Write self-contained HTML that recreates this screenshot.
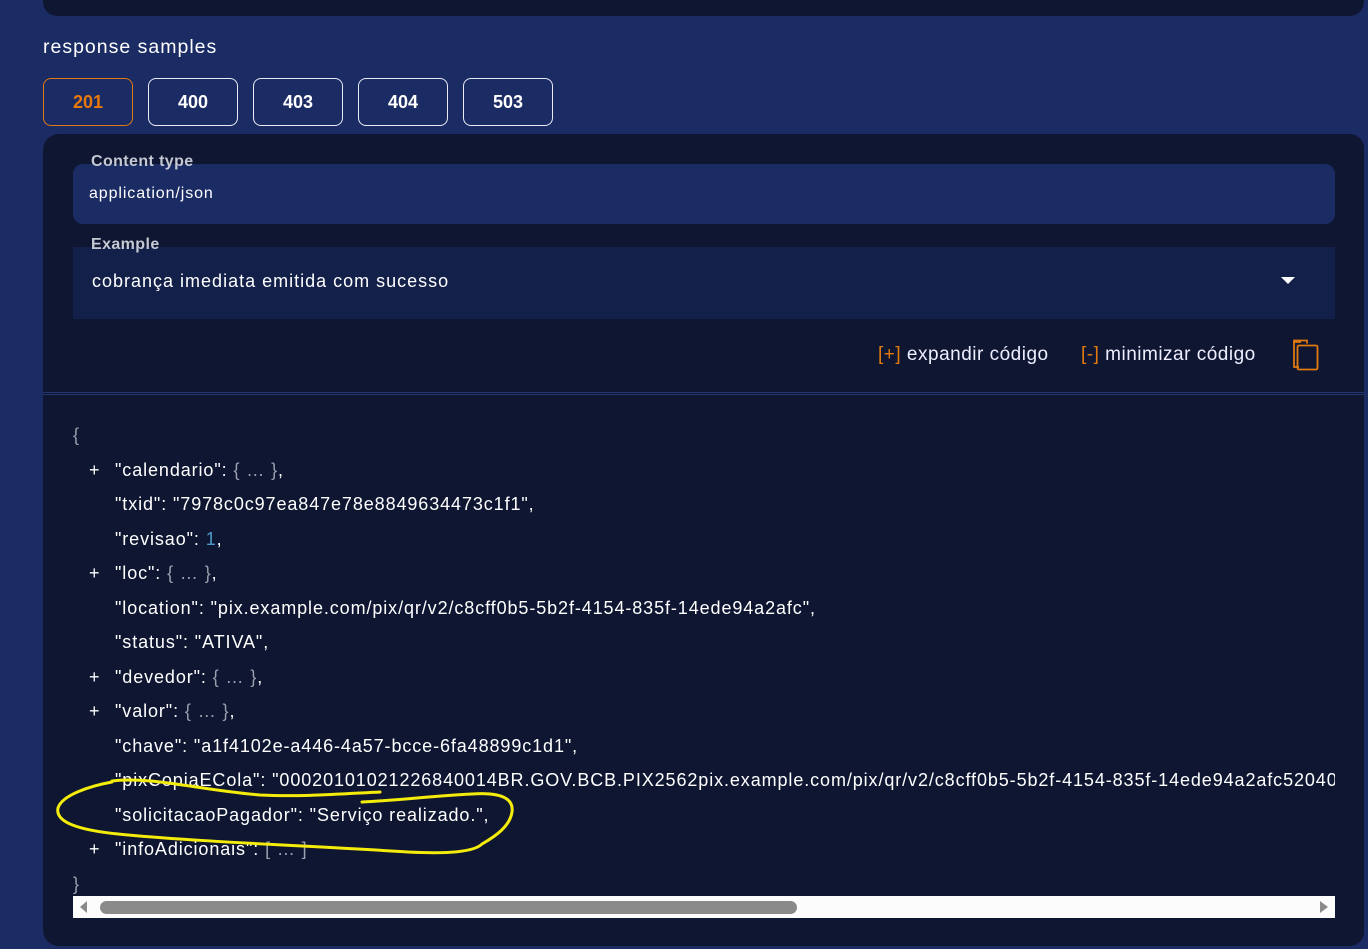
<!DOCTYPE html>
<html><head><meta charset="utf-8"><style>
*{margin:0;padding:0;box-sizing:border-box}
html,body{width:1368px;height:949px;overflow:hidden;background:#1b2b64;font-family:"Liberation Sans",Arial,sans-serif;color:#fff}
.top{position:absolute;left:43px;top:-20px;width:1321px;height:36px;background:#0e1632;border-radius:0 0 14px 14px}
.title{position:absolute;left:43px;top:36px;font-size:19.5px;letter-spacing:1px;color:#fff}
.tab{position:absolute;top:78px;width:90px;height:48px;border:1px solid #e9ecf5;border-radius:8px;font-weight:bold;font-size:18px;text-align:center;line-height:46px;color:#fff}
.tab.a{border-color:#e07a10;color:#e8780c}
.panel{position:absolute;left:43px;top:134px;width:1321px;height:812px;background:#0e1632;border-radius:16px 14px 14px 16px;overflow:hidden}
.lbl{position:absolute;left:48px;font-weight:bold;font-size:16px;letter-spacing:.4px;color:#c5c9d4;z-index:2}
.ct{position:absolute;left:30px;top:30px;width:1262px;height:60px;background:#1b2b64;border-radius:10px;font-size:16px;letter-spacing:.9px;padding:21px 0 0 16px}
.ex{position:absolute;left:30px;top:113px;width:1262px;height:72px;background:#13204a;font-size:18px;letter-spacing:1px;padding:24px 0 0 19px}
.tri{position:absolute;right:40px;top:30px;width:0;height:0;border-left:7px solid transparent;border-right:7px solid transparent;border-top:7px solid #fff}
.act{position:absolute;top:210px;font-size:19px;letter-spacing:.5px;color:#eef}
.act b{font-weight:normal;color:#e07a10}
.sep{position:absolute;left:0;top:258px;width:100%;height:3px;border-top:1px solid #22356e;border-bottom:1px solid #22356e}
.code{position:absolute;left:30px;top:284px;width:1262px;height:476px;overflow:hidden;font-size:18px;letter-spacing:.9px;line-height:34.5px;white-space:pre;color:#fff}
.code div{position:relative;padding-left:42px;height:34.5px}
.code div.b{padding-left:0}
.code i{font-style:normal;position:absolute;left:16px}
.g{color:#9aa0ad}.n{color:#4f9ac8}
.sb{position:absolute;left:30px;top:762px;width:1262px;height:22px;background:#fcfcfc}
.th{position:absolute;left:27px;top:5px;width:697px;height:13px;background:#8a8a8a;border-radius:7px}
</style></head><body>
<div class="top"></div>
<div class="title">response samples</div>
<div class="tab a" style="left:43px">201</div>
<div class="tab" style="left:148px">400</div>
<div class="tab" style="left:253px">403</div>
<div class="tab" style="left:358px">404</div>
<div class="tab" style="left:463px">503</div>
<div class="panel">
<div class="lbl" style="top:19px">Content type</div>
<div class="ct">application/json</div>
<div class="lbl" style="top:102px">Example</div>
<div class="ex">cobrança imediata emitida com sucesso<div class="tri"></div></div>
<div class="act" style="left:835px"><b>[+]</b> expandir código</div>
<div class="act" style="left:1038px"><b>[-]</b> minimizar código</div>
<svg style="position:absolute;left:1246px;top:204px" width="32" height="34"><path d="M12 4H5v25h5" fill="none" stroke="#e07a10" stroke-width="1.8"/><path d="M5 4v-1.5h13v3" fill="none" stroke="#e07a10" stroke-width="1.8"/><rect x="8.5" y="7.5" width="20" height="24" rx="1.5" fill="none" stroke="#e07a10" stroke-width="1.8"/></svg>
<div class="sep"></div>
<div class="code"><div class="b"><span class="g">{</span></div><div><i>+</i>"calendario": <span class="g">{ … }</span>,</div><div>"txid": "7978c0c97ea847e78e8849634473c1f1",</div><div>"revisao": <span class="n">1</span>,</div><div><i>+</i>"loc": <span class="g">{ … }</span>,</div><div>"location": "pix.example.com/pix/qr/v2/c8cff0b5-5b2f-4154-835f-14ede94a2afc",</div><div>"status": "ATIVA",</div><div><i>+</i>"devedor": <span class="g">{ … }</span>,</div><div><i>+</i>"valor": <span class="g">{ … }</span>,</div><div>"chave": "a1f4102e-a446-4a57-bcce-6fa48899c1d1",</div><div>"pixCopiaECola": "00020101021226840014BR.GOV.BCB.PIX2562pix.example.com/pix/qr/v2/c8cff0b5-5b2f-4154-835f-14ede94a2afc5204000053039865802BR",</div><div>"solicitacaoPagador": "Serviço realizado.",</div><div><i>+</i>"infoAdicionais": <span class="g">[ … ]</span></div><div class="b"><span class="g">}</span></div></div>
<div class="sb"><svg style="position:absolute;left:7px;top:5px" width="8" height="12"><path d="M7 0v12L0 6z" fill="#8a8a8a"/></svg><div class="th"></div><svg style="position:absolute;right:7px;top:5px" width="8" height="12"><path d="M0 0v12L8 6z" fill="#8a8a8a"/></svg></div>
</div>
<svg style="position:absolute;left:0;top:0" width="1368" height="949"><path d="M112 782C90 786 62 795 58 808c-3 14 20 22 60 26 80 8 200 12 290 18 40 2 66 0 74-8 14-8 28-18 30-32 2-14-12-20-40-18-40 2-70 6-110 8" fill="none" stroke="#f4ec0a" stroke-width="3" stroke-linecap="round"/><path d="M112 781C150 776 200 790 260 795c40 2 80-1 120-3" fill="none" stroke="#f4ec0a" stroke-width="3" stroke-linecap="round"/></svg>
</body></html>
